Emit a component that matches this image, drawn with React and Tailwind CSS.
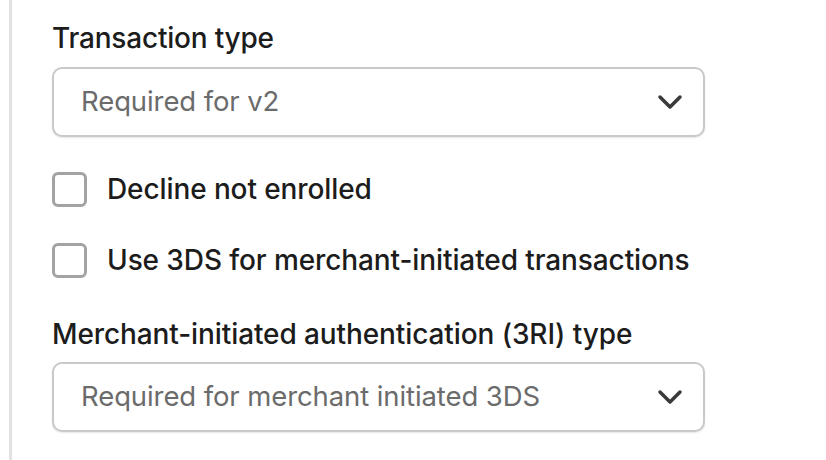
function Chevron() {
  return (
    <svg width="26" height="18" viewBox="0 0 26 18" fill="none" className="text-[#3a3a3a]">
      <polyline points="3,4 13,14 23,4" stroke="currentColor" strokeWidth="3.5" strokeLinecap="round" strokeLinejoin="round" />
    </svg>
  );
}

function SelectBox({ placeholder }) {
  return (
    <div className="flex h-[70px] w-[653px] items-center justify-between rounded-[10px] border-2 border-[#c9c9c9] bg-white pl-[27px] pr-[20px] shadow-[0_1px_2px_rgba(0,0,0,0.10)]">
      <span className="text-[27.5px] tracking-[-0.1px] text-[#6b6b6b]">{placeholder}</span>
      <Chevron />
    </div>
  );
}

function Checkbox({ label }) {
  return (
    <label className="flex h-[42px] items-center gap-[20px]">
      <span className="h-[35px] w-[35px] rounded-[6px] border-[3px] border-[#a3a3a3] bg-white" />
      <span className="text-[28px] font-medium tracking-[-0.1px] text-[#1c1c1c]">{label}</span>
    </label>
  );
}

export default function App() {
  return (
    <div
      className="h-[460px] w-[826px] bg-white"
      style={{ fontFamily: 'Inter, "Noto Sans", sans-serif' }}
    >
      <div className="ml-[9px] h-full border-l-[3px] border-[#e2e2e2] pl-[40px] pt-[18px]">
        <div className="text-[28px] font-medium leading-[40px] tracking-[-0.2px] text-[#1c1c1c]">Transaction type</div>
        <div className="mt-[9px]">
          <SelectBox placeholder="Required for v2" />
        </div>
        <div className="mt-[31px] flex flex-col gap-[29px]">
          <Checkbox label="Decline not enrolled" />
          <Checkbox label="Use 3DS for merchant-initiated transactions" />
        </div>
        <div className="mt-[33px] text-[28px] font-medium leading-[40px] tracking-[-0.1px] text-[#1c1c1c]">
          Merchant-initiated authentication (3RI) type
        </div>
        <div className="mt-[8px]">
          <SelectBox placeholder="Required for merchant initiated 3DS" />
        </div>
      </div>
    </div>
  );
}
